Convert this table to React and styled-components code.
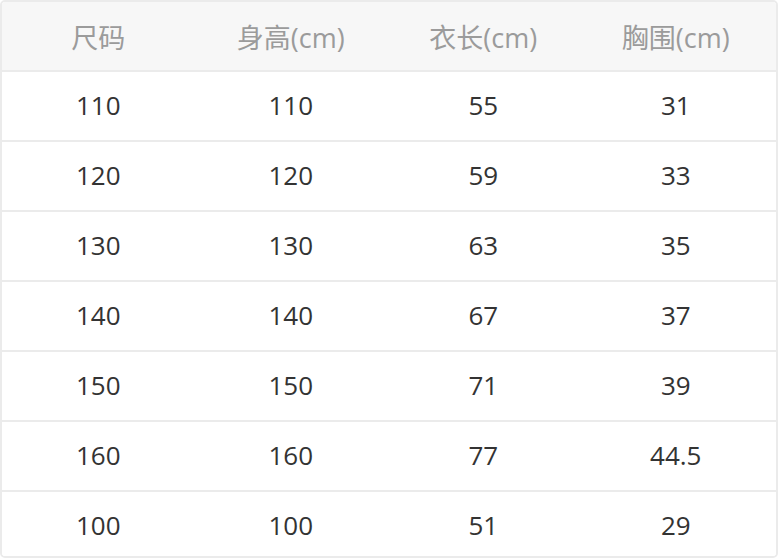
import React from "react";
import styled, { createGlobalStyle } from "styled-components";

const Global = createGlobalStyle`
  html, body { margin: 0; padding: 0; background: #ffffff; }
  body { font-family: "Open Sans", "Noto Sans CJK SC", sans-serif; }
`;

const Table = styled.div`
  box-sizing: border-box;
  width: 778px;
  height: 558px;
  border: 2px solid #ebebeb;
  border-radius: 5px;
  overflow: hidden;
  display: flex;
  flex-direction: column;
`;

const Row = styled.div`
  display: grid;
  grid-template-columns: repeat(4, 192.5px);
  height: ${(p) => p.$h}px;
  flex: none;
  background: ${(p) => (p.$head ? "#f7f7f7" : "#ffffff")};
  border-bottom: ${(p) => (p.$last ? "none" : "2px solid #ebebeb")};
`;

const Cell = styled.div`
  box-sizing: border-box;
  display: flex;
  align-items: center;
  justify-content: center;
  font-size: ${(p) => (p.$head ? 27 : 26)}px;
  color: ${(p) => (p.$head ? "#9b9b9b" : "#333333")};
  padding-top: ${(p) => p.$pt || 0}px;
  padding-bottom: ${(p) => (p.$head ? 0 : 2)}px;
  white-space: nowrap;
`;

const header = ["尺码", "身高(cm)", "衣长(cm)", "胸围(cm)"];
const rows = [
  ["110", "110", "55", "31"],
  ["120", "120", "59", "33"],
  ["130", "130", "63", "35"],
  ["140", "140", "67", "37"],
  ["150", "150", "71", "39"],
  ["160", "160", "77", "44.5"],
  ["100", "100", "51", "29"],
];

export default function App() {
  return (
    <>
      <Global />
      <Table>
        <Row $head $h={68}>
          {header.map((h) => (
            <Cell key={h} $head>
              {h}
            </Cell>
          ))}
        </Row>
        {rows.map((r, i) => {
          const last = i === rows.length - 1;
          return (
            <Row key={i} $last={last} $h={last ? 64 : 68}>
              {r.map((c, j) => (
                <Cell key={j} $pt={last ? 4 : 0}>
                  {c}
                </Cell>
              ))}
            </Row>
          );
        })}
      </Table>
    </>
  );
}
